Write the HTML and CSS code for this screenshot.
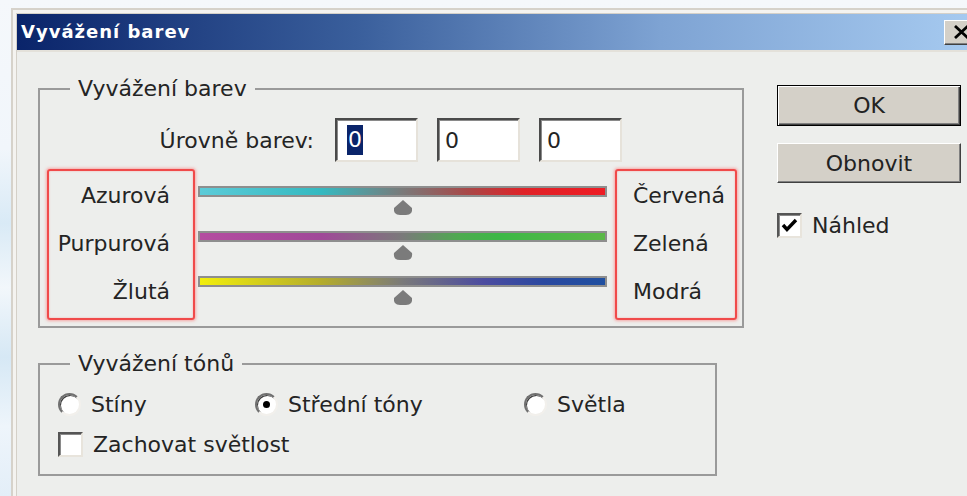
FILE: index.html
```html
<!DOCTYPE html>
<html lang="cs">
<head>
<meta charset="utf-8">
<title>Vyvážení barev</title>
<link rel="stylesheet" href="styles.css">
</head>
<body>
<div class="dialog">
  <div class="frame">
    <div class="titlebar">
      <span class="title">Vyvážení barev</span>
      <span class="close">
        <svg width="17" height="14" viewBox="0 0 17 14"><path d="M2 1 L15 13 M15 1 L2 13" stroke="#000" stroke-width="2.8" fill="none"/></svg>
      </span>
    </div>
    <div class="content">
      <div class="main">
        <section class="group group-color">
          <div class="group-title">Vyvážení barev</div>
          <div class="levels">
            <span class="levels-label">Úrovně barev:</span>
            <span class="field"><span class="sel">0</span></span>
            <span class="field">0</span>
            <span class="field">0</span>
          </div>
          <div class="balance">
            <div class="marked marked-left">
              <span>Azurová</span>
              <span>Purpurová</span>
              <span>Žlutá</span>
            </div>
            <div class="sliders">
              <div class="slider">
                <div class="track track-cr"></div>
                <svg class="thumb" width="20" height="15" viewBox="0 0 20 15"><path d="M10 0 L19 8 Q20 15 13 15 L7 15 Q0 15 1 8 Z" fill="#7b7b7b"/></svg>
              </div>
              <div class="slider">
                <div class="track track-mg"></div>
                <svg class="thumb" width="20" height="15" viewBox="0 0 20 15"><path d="M10 0 L19 8 Q20 15 13 15 L7 15 Q0 15 1 8 Z" fill="#7b7b7b"/></svg>
              </div>
              <div class="slider">
                <div class="track track-yb"></div>
                <svg class="thumb" width="20" height="15" viewBox="0 0 20 15"><path d="M10 0 L19 8 Q20 15 13 15 L7 15 Q0 15 1 8 Z" fill="#7b7b7b"/></svg>
              </div>
            </div>
            <div class="marked marked-right">
              <span>Červená</span>
              <span>Zelená</span>
              <span>Modrá</span>
            </div>
          </div>
        </section>

        <section class="group group-tone">
          <div class="group-title">Vyvážení tónů</div>
          <div class="tones">
            <span class="radio"><span class="dot"></span>Stíny</span>
            <span class="radio"><span class="dot dot-on"></span>Střední tóny</span>
            <span class="radio"><span class="dot"></span>Světla</span>
          </div>
          <div class="check-row"><span class="box"></span>Zachovat světlost</div>
        </section>
      </div>

      <div class="side">
        <div class="btn btn-default">OK</div>
        <div class="btn btn-reset">Obnovit</div>
        <div class="check-row check-preview">
          <span class="box">
            <svg width="21" height="21" viewBox="0 0 21 21"><path d="M4 10 L8 14.5 L17 5" stroke="#000" stroke-width="3.4" fill="none"/></svg>
          </span>Náhled
        </div>
      </div>
    </div>
  </div>
</div>
</body>
</html>
```

FILE: styles.css
```css
html, body {
  margin: 0;
  padding: 0;
}

body {
  width: 967px;
  height: 496px;
  overflow: hidden;
  font-family: "DejaVu Sans", "Noto Sans", sans-serif;
  color: #242424;
  background: linear-gradient(180deg, #f5f8fb 0%, #f1f6fb 30%, #d9eaf6 45%, #f2f7fb 58%, #d6e8f5 72%, #eef5fb 86%, #e3eef8 100%);
}

/* window frame */
.dialog {
  margin: 8px 0 0 11px;
  width: 990px;
  height: 500px;
  border-left: 2px solid #d6d2ca;
  border-top: 2px solid #d6d2ca;
  padding: 3px 0 0 3px;
  background: #f4f3f0;
}

.frame {
  height: 100%;
  border-left: 1px solid #d4d0c8;
  border-top: 1px solid #d4d0c8;
  background: #edeeec;
}

.titlebar {
  box-sizing: border-box;
  width: 975px;
  height: 38px;
  padding: 0 14px 0 4px;
  display: flex;
  align-items: center;
  justify-content: space-between;
  background: linear-gradient(90deg, #0a246a 0%, #3a5f9c 35%, #7ea3d3 66%, #a6caf0 98%);
  border-bottom: 2px solid #e4e1da;
}

.title {
  color: #fff;
  font-weight: bold;
  font-size: 18px;
  letter-spacing: 1px;
  line-height: 24px;
}

.close {
  box-sizing: border-box;
  width: 34px;
  height: 25px;
  display: flex;
  align-items: center;
  justify-content: center;
  background: #d4d0c8;
  border: 1px solid;
  border-color: #fff #404040 #404040 #fff;
  box-shadow: inset -1px -1px 0 #808080;
}

/* dialog content */
.content {
  display: flex;
}

.main {
  padding: 36px 0 0 21px;
}

.group {
  box-sizing: border-box;
  border: 2px solid #9a9a9a;
  font-size: 22px;
}

.group-title {
  width: max-content;
  margin: -13px 0 0 30px;
  padding: 0 8px;
  line-height: 24px;
  background: #edeeec;
}

.group-color {
  width: 706px;
  padding-bottom: 5px;
}

.levels {
  display: flex;
  align-items: center;
  margin-top: 17px;
  height: 44px;
}

.levels-label {
  width: 274px;
  margin-right: 21px;
  text-align: right;
}

.field {
  box-sizing: border-box;
  width: 83px;
  height: 44px;
  margin-right: 19px;
  padding-left: 6px;
  display: flex;
  align-items: center;
  background: #fff;
  border: 2px solid;
  border-color: #4a4a4a #e6e2da #e6e2da #4a4a4a;
  box-shadow: inset 1px 1px 0 #8a8a8a;
}

.sel {
  margin-left: 4px;
  padding: 0 1px;
  line-height: 30px;
  background: #0a246a;
  color: #fff;
}

.balance {
  display: flex;
  margin: 7px 0 0 7px;
}

.marked {
  box-sizing: border-box;
  height: 151px;
  display: flex;
  flex-direction: column;
  padding-top: 1px;
  line-height: 48px;
  border: 2px solid #f04a4a;
  border-radius: 3px;
  box-shadow: 0 0 3px 1px rgba(255, 110, 110, 0.55), inset 0 0 2px rgba(255, 110, 110, 0.5);
}

.marked-left {
  width: 148px;
  align-items: flex-end;
  padding-right: 23px;
}

.marked-right {
  width: 122px;
  margin-left: 8px;
  padding-left: 16px;
}

.sliders {
  width: 409px;
  margin-left: 3px;
  padding-top: 17px;
}

.slider {
  height: 45px;
  display: flex;
  flex-direction: column;
  align-items: center;
}

.track {
  box-sizing: border-box;
  width: 100%;
  height: 11px;
  border: 2px solid #8e8e8e;
}

.track-cr {
  background: linear-gradient(90deg, #5ccbd8 0%, #35b9c0 30%, #7a7a7a 50%, #a84848 66%, #e02228 80%, #ee1c24 100%);
}

.track-mg {
  background: linear-gradient(90deg, #b44ca0 0%, #a04898 30%, #7a7a7a 50%, #4eaa50 64%, #3cb846 74%, #5cb848 100%);
}

.track-yb {
  background: linear-gradient(90deg, #f2ee0c 0%, #b4ac2c 30%, #7a7a7a 50%, #4c4ca0 70%, #2a48a0 85%, #1f4fa0 100%);
}

.thumb {
  display: block;
  margin-top: 3px;
}

.group-tone {
  width: 679px;
  margin-top: 35px;
  padding-bottom: 15px;
}

.tones {
  display: grid;
  grid-template-columns: 197px 269px auto;
  margin: 13px 0 0 18px;
  height: 30px;
  align-items: center;
}

.radio {
  display: flex;
  align-items: center;
  gap: 10px;
}

.dot {
  box-sizing: border-box;
  width: 23px;
  height: 23px;
  border-radius: 50%;
  background: #fff;
  border: 2px solid;
  border-color: #707070 #f2f0ec #f2f0ec #707070;
  box-shadow: inset 1px 1px 0 #3c3c3c;
  display: flex;
  align-items: center;
  justify-content: center;
}

.dot-on::after {
  content: "";
  width: 7px;
  height: 7px;
  border-radius: 50%;
  background: #000;
}

.check-row {
  display: flex;
  align-items: center;
  gap: 10px;
  height: 30px;
  margin: 10px 0 0 18px;
}

.box {
  box-sizing: border-box;
  width: 25px;
  height: 25px;
  background: #fff;
  border: 2px solid;
  border-color: #555 #e8e4dc #e8e4dc #555;
  box-shadow: inset 1px 1px 0 #8a8a8a;
  display: flex;
  align-items: center;
  justify-content: center;
}

/* right-hand buttons */
.side {
  width: 184px;
  margin-left: 33px;
  padding-top: 33px;
  font-size: 22px;
}

.btn {
  box-sizing: border-box;
  height: 40px;
  display: flex;
  align-items: center;
  justify-content: center;
  background: #d4d0c8;
  border: 1px solid;
  border-color: #fff #404040 #404040 #fff;
  box-shadow: inset -1px -1px 0 #808080;
  color: #222;
}

.btn-default {
  height: 41px;
  border: 1px solid #000;
  box-shadow: inset 1px 1px 0 #fff, inset -1px -1px 0 #404040, inset -2px -2px 0 #808080;
}

.btn-reset {
  margin-top: 17px;
}

.check-preview {
  margin: 27px 0 0 0;
}
```
